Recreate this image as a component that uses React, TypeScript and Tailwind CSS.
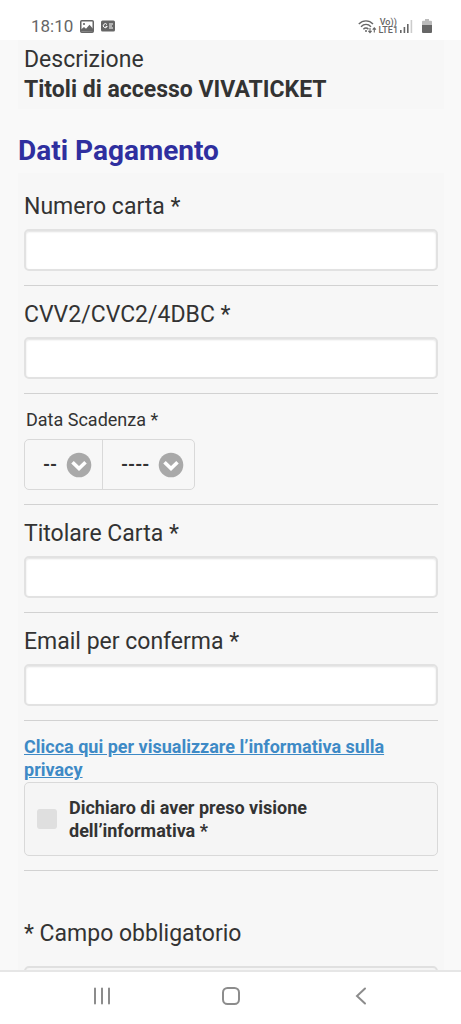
import type { ReactNode } from "react";

const months = ["01", "02", "03", "04", "05", "06", "07", "08", "09", "10", "11", "12"];
const years = ["2024", "2025", "2026", "2027", "2028", "2029", "2030"];

export default function App() {
  return (
    <div className="flex h-screen flex-col bg-[#f9f9f9] font-['Roboto',sans-serif] text-[#333]">
      <StatusBar />

      <main className="min-h-0 flex-1 overflow-hidden pl-[18px] pr-[17px]">
        <section className="bg-[#f7f7f7] px-1.5 pt-[5px] pb-1 text-[23px] leading-[30px]">
          <p>Descrizione</p>
          <p className="font-bold">Titoli di accesso VIVATICKET</p>
        </section>

        <h2 className="pt-6 pb-1 text-[28px] leading-9 font-bold text-[#2f2f9f]">Dati Pagamento</h2>

        <form className="bg-[#f7f7f7] px-1.5 pt-[5px]">
          <TextField id="card" label="Numero carta *" />
          <TextField id="cvv" label="CVV2/CVC2/4DBC *" />

          <Row>
            <fieldset>
              <legend className="px-0.5 text-lg leading-6">Data Scadenza *</legend>
              <div className="mt-[7px] flex h-[51px] w-fit rounded-[5px] border border-[#d9d9d9]">
                <DateSelect label="Mese" placeholder="--" options={months} className="w-[77px] pl-[18px]" />
                <DateSelect
                  label="Anno"
                  placeholder="----"
                  options={years}
                  className="w-[92px] border-l border-[#d9d9d9] pl-[18px]"
                />
              </div>
            </fieldset>
          </Row>

          <TextField id="holder" label="Titolare Carta *" />
          <TextField id="email" label="Email per conferma *" type="email" />

          <Row>
            <a href="#privacy" className="block text-lg leading-[23px] font-bold text-[#3e8ac6] underline">
              Clicca qui per visualizzare l’informativa sulla privacy
            </a>
            <label
              htmlFor="consent"
              className="mt-px flex items-center gap-3 rounded-[5px] border border-[#d9d9d9] bg-[#f5f5f5] px-3 py-[13px] text-lg leading-[23px] font-bold"
            >
              <input
                id="consent"
                type="checkbox"
                className="h-5 w-5 shrink-0 appearance-none rounded-[3px] bg-[#dfdfdf] checked:bg-[#3e8ac6]"
              />
              <span className="max-w-[270px]">Dichiaro di aver preso visione dell’informativa *</span>
            </label>
          </Row>

          <p className="pt-12 text-[23px] leading-[30px]">* Campo obbligatorio</p>
          <button
            type="submit"
            aria-label="Conferma"
            className="mt-[17px] h-12 w-full rounded-[5px] border-2 border-[#e0e0e0] bg-[#f5f5f5]"
          />
        </form>
      </main>

      <NavBar />
    </div>
  );
}

const Row = ({ children }: { children: ReactNode }) => (
  <div className="border-b border-[#d2d2d2] py-3.5">{children}</div>
);

const TextField = ({ id, label, type = "text" }: { id: string; label: string; type?: string }) => (
  <Row>
    <label htmlFor={id} className="block text-[23px] leading-[30px]">
      {label}
    </label>
    <input
      id={id}
      type={type}
      className="mt-[7px] block h-[42px] w-full rounded-[5px] border-2 border-[#e2e2e2] bg-white px-2 text-lg shadow-[inset_0_1px_2px_rgba(0,0,0,0.12)]"
    />
  </Row>
);

const DateSelect = ({ label, placeholder, options, className }: {
  label: string;
  placeholder: string;
  options: string[];
  className: string;
}) => (
  <div className={`relative flex items-center ${className}`}>
    <select aria-label={label} className="h-full w-full appearance-none bg-transparent text-lg font-bold text-[#333]">
      <option>{placeholder}</option>
      {options.map((o) => (
        <option key={o}>{o}</option>
      ))}
    </select>
    {/* Arrow sits over the native select */}
    <svg viewBox="0 0 26 26" className="pointer-events-none absolute right-2.5 h-[26px] w-[26px]">
      <circle cx="13" cy="13" r="12.3" fill="#a9a9a9" />
      <path d="M6.5 10.2l6.5 6.3 6.5-6.3" fill="none" stroke="#fff" strokeWidth="3.6" />
    </svg>
  </div>
);

const StatusBar = () => (
  <header className="flex h-10 shrink-0 items-center justify-between bg-white pt-3 pr-[29px] pl-[31px] text-[#666]">
    <div className="flex items-center gap-[7px]">
      <span className="text-[17px] leading-5">18:10</span>
      <svg viewBox="0 0 14 13" className="h-[13px] w-3.5">
        <rect x="0.75" y="0.75" width="12.5" height="11.5" rx="1" fill="none" stroke="#666" strokeWidth="1.5" />
        <path d="M1 11.5V9.5l3-2.5 2 1.7 3.5-4 3.5 4v3z" fill="#666" />
        <circle cx="4" cy="4" r="1.1" fill="#666" />
      </svg>
      <svg viewBox="0 0 14 12" className="h-3 w-3.5">
        <rect y="0.5" width="14" height="11" rx="1.5" fill="#666" />
        <path d="M6 4.6A2 2 0 1 0 6.2 6.4H4.6M8 4h4M8 6h3M8 8h4" fill="none" stroke="#fff" strokeWidth="1" />
      </svg>
    </div>

    <div className="flex items-center">
      <svg viewBox="0 0 19 15" className="h-[15px] w-[19px]" fill="none" stroke="#666" strokeWidth="1.4">
        <path d="M0.8 5C4.8 0.8 11.2 0.8 15 5M3 7.8c3-3 7-3 10 0M5.4 10.2c1.6-1.6 3.6-1.6 5 0" />
        <circle cx="8" cy="12" r="1" fill="#666" stroke="none" />
        <path d="M12 9v4.2M10.4 11.8L12 13.6l1.6-1.8M16.3 13.4V9.2M14.7 10.6l1.6-1.8 1.6 1.8" strokeWidth="1.1" />
      </svg>
      <div className="ml-0.5 text-center text-[9px] leading-[8px] font-medium">
        <div>Vo))</div>
        <div>LTE1</div>
      </div>
      <svg viewBox="0 0 13 13" className="ml-0.5 h-[13px] w-[13px]" fill="#666">
        <rect x="0" y="10" width="1.6" height="3" />
        <rect x="3.6" y="7" width="1.6" height="6" />
        <rect x="7" y="4" width="1.6" height="9" />
        <rect x="10.6" y="0" width="1.6" height="13" fill="#ccc" />
      </svg>
      <svg viewBox="0 0 10 14" className="ml-[9px] h-3.5 w-2.5">
        <path d="M3 0h4v1.8h2a1 1 0 0 1 1 1V6H0V2.8a1 1 0 0 1 1-1h2z" fill="#bbb" />
        <path d="M0 6h10v7a1 1 0 0 1-1 1H1a1 1 0 0 1-1-1z" fill="#666" />
      </svg>
    </div>
  </header>
);

const NavBar = () => (
  <nav className="flex h-[54px] shrink-0 items-center justify-between border-t-2 border-[#e6e6e6] bg-white px-[90px] pb-1">
    <button type="button" aria-label="Recenti" className="flex w-6 justify-center">
      <svg viewBox="0 0 18 18" className="h-[18px] w-[18px]" stroke="#8c8c8c" strokeWidth="2" strokeLinecap="round">
        <path d="M2 1.5v15M9 1.5v15M16 1.5v15" />
      </svg>
    </button>
    <button type="button" aria-label="Home" className="flex w-6 justify-center">
      <svg viewBox="0 0 18 18" className="h-[18px] w-[18px]">
        <rect x="1" y="1" width="16" height="16" rx="4.5" fill="none" stroke="#8c8c8c" strokeWidth="2" />
      </svg>
    </button>
    <button type="button" aria-label="Indietro" className="flex w-6 justify-center">
      <svg viewBox="0 0 18 18" className="h-[18px] w-[18px]" fill="none" stroke="#8c8c8c" strokeWidth="2">
        <path d="M15 1.5L7 9l8 7.5" strokeLinecap="round" />
      </svg>
    </button>
  </nav>
);
